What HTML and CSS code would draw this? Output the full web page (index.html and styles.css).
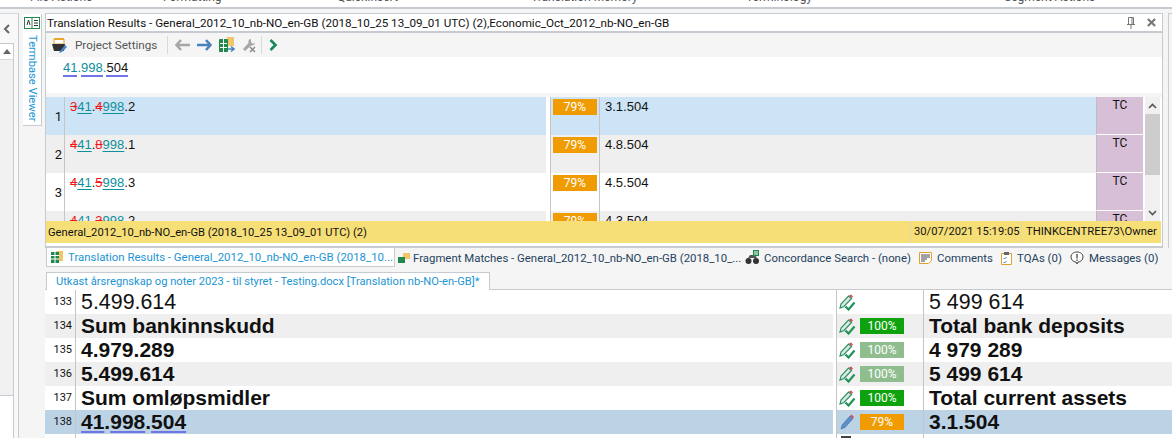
FILE: index.html
```html
<!DOCTYPE html>
<html lang="en">
<head>
    <meta charset="UTF-8">
    <title>Translation Results</title>
    <link rel="stylesheet" href="styles.css">
</head>
<body>
    <div class="ribbon">
        <span class="ribbon-label rl-1">File Actions</span>
        <span class="ribbon-label rl-2">Formatting</span>
        <span class="ribbon-label rl-3">QuickInsert</span>
        <span class="ribbon-label rl-4">Translation Memory</span>
        <span class="ribbon-label rl-5">Terminology</span>
        <span class="ribbon-label rl-6">Segment Actions</span>
    </div>
    <div class="workspace">
        <div class="side-strip">
            <div class="collapse">
                <svg width="8" height="10" viewBox="0 0 8 10"><path d="M6 1 2 5l4 4" fill="none" stroke="#666" stroke-width="2"/></svg>
            </div>
            <div class="side-scroll">
                <svg width="8" height="5" viewBox="0 0 8 5"><path d="M0 5 4 0l4 5z" fill="#666"/></svg>
            </div>
            <div class="side-body"></div>
            <div class="side-white"></div>
        </div>
        <div class="gutter">
            <div class="termbase-tab">
                <svg width="16" height="12" viewBox="0 0 16 12"><rect x=".5" y=".5" width="15" height="11" fill="#fff" stroke="#1f8a4c"/><path d="M8 .5v11" stroke="#1f8a4c"/><path d="M3 8l1.500-5L6 8M10 3.500h4M10 6h4M10 8.500h4" fill="none" stroke="#333"/></svg>
                <span class="termbase-label">Termbase Viewer</span>
            </div>
        </div>
        <div class="content">
            <div class="upper">
                <div class="results-panel">
                    <div class="panel-title">
                        <span class="panel-name">Translation Results - General_2012_10_nb-NO_en-GB (2018_10_25 13_09_01 UTC) (2),Economic_Oct_2012_nb-NO_en-GB</span>
                        <svg class="pin" width="8" height="12" viewBox="0 0 8 12"><path d="M1.500.5h5v7h-5zM0 7.500h8M4 8v4M5 1v6" fill="none" stroke="#777"/></svg>
                        <svg class="close" width="9" height="9" viewBox="0 0 10 10"><path d="M1 1l8 8M9 1 1 9" stroke="#777" stroke-width="2.400"/></svg>
                    </div>
                    <div class="toolbar">
                        <svg class="tool-folder" width="16" height="15" viewBox="0 0 16 15"><path d="M2 1h10v5H2z" fill="#fff" stroke="#e0a030"/><path d="M2 1h10" stroke="#e9a82c" stroke-width="2"/><path d="M0 6h13l-1 7H2z" fill="#333"/><path d="M8 13l5-6 2 2-5 5-3 1z" fill="#4a86c5"/></svg>
                        <span class="tool-text">Project Settings</span>
                        <span class="tool-sep"></span>
                        <svg class="tool-icon" width="15" height="12" viewBox="0 0 15 12"><path d="M6 1 1.500 6 6 11M2 6h13" fill="none" stroke="#a6a6a6" stroke-width="2.600"/></svg>
                        <svg class="tool-icon" width="15" height="12" viewBox="0 0 15 12"><path d="M9 1l4.500 5L9 11M13 6H0" fill="none" stroke="#4a82bd" stroke-width="2.600"/></svg>
                        <svg class="tool-icon" width="16" height="16" viewBox="0 0 16 16"><path d="M8 0h7v9H8z" fill="#f2c56b"/><path d="M.5 2.500h8v12h-8z" fill="#fff" stroke="#1f8a4c"/><path d="M1 3h7v3H1zM1 7h7v3H1zM1 11h7v3H1z" fill="#1f8a4c"/><path d="M4.500 2v13" stroke="#fff"/><path d="M9 12h5M12 9.500l3 2.500-3 2.500" fill="none" stroke="#4a82bd" stroke-width="1.500"/></svg>
                        <svg class="tool-icon tool-last" width="15" height="15" viewBox="0 0 15 15"><path d="M9 1C7 1 6 3 6.500 5L1 11l2 2 6-5.500c2 .5 4-1 4-3l-2 1.500-2-2z" fill="#a6a6a6"/><path d="M8 9l5 5M13 9l-5 5" stroke="#8a8a8a" stroke-width="1.500"/></svg>
                        <span class="tool-sep"></span>
                        <svg class="tool-icon" width="9" height="12" viewBox="0 0 9 12"><path d="M1.500 1l5 5-5 5" fill="none" stroke="#148a5c" stroke-width="2.600"/></svg>
                    </div>
                    <div class="source-pane">
                        <span class="frag teal">41</span><span class="teal">.</span><span class="frag teal">998</span><span class="teal">.</span><span class="frag">504</span>
                    </div>
                    <div class="results-body">
                        <div class="results-grid">
                            <div class="res-row res-active">
                                <div class="res-num">1</div>
                                <div class="res-src"><span class="del">3</span><span class="ins">41</span>.<span class="del">4</span><span class="ins">998</span>.2</div>
                                <div class="res-score"><span class="badge badge-orange">79%</span></div>
                                <div class="res-trg">3.1.504</div>
                                <div class="res-tc">TC</div>
                            </div>
                            <div class="res-row res-alt">
                                <div class="res-num">2</div>
                                <div class="res-src"><span class="del">4</span><span class="ins">41</span>.<span class="del">8</span><span class="ins">998</span>.1</div>
                                <div class="res-score"><span class="badge badge-orange">79%</span></div>
                                <div class="res-trg">4.8.504</div>
                                <div class="res-tc">TC</div>
                            </div>
                            <div class="res-row">
                                <div class="res-num">3</div>
                                <div class="res-src"><span class="del">4</span><span class="ins">41</span>.<span class="del">5</span><span class="ins">998</span>.3</div>
                                <div class="res-score"><span class="badge badge-orange">79%</span></div>
                                <div class="res-trg">4.5.504</div>
                                <div class="res-tc">TC</div>
                            </div>
                            <div class="res-row res-alt">
                                <div class="res-num">4</div>
                                <div class="res-src"><span class="del">4</span><span class="ins">41</span>.<span class="del">3</span><span class="ins">998</span>.2</div>
                                <div class="res-score"><span class="badge badge-orange">79%</span></div>
                                <div class="res-trg">4.3.504</div>
                                <div class="res-tc">TC</div>
                            </div>
                        </div>
                        <div class="scrollbar">
                            <div class="scroll-btn"><svg width="9" height="6" viewBox="0 0 9 6"><path d="M1 5l3.500-3.500L8 5" fill="none" stroke="#555" stroke-width="1.600"/></svg></div>
                            <div class="scroll-thumb"></div>
                            <div class="scroll-track"></div>
                            <div class="scroll-btn"><svg width="9" height="6" viewBox="0 0 9 6"><path d="M1 1l3.500 3.500L8 1" fill="none" stroke="#555" stroke-width="1.600"/></svg></div>
                        </div>
                    </div>
                    <div class="status-bar">
                        <span class="status-name">General_2012_10_nb-NO_en-GB (2018_10_25 13_09_01 UTC) (2)</span>
                        <span class="status-date">30/07/2021 15:19:05</span>
                        <span class="status-user">THINKCENTREE73\Owner</span>
                    </div>
                </div>
                <div class="right-strip"></div>
            </div>
            <div class="dock-tabs">
                <div class="dock-tab dock-active">
                    <svg width="14" height="14" viewBox="0 0 14 14"><path d="M6 1h7v10H6z" fill="#f2c56b"/><path d="M1 2h8v11H1z" fill="#1f8a4c"/><path d="M1 5.500h8M1 9h8M5 2v11" stroke="#fff"/></svg>
                    <span>Translation Results - General_2012_10_nb-NO_en-GB (2018_10...</span>
                </div>
                <div class="dock-tab dock-frag">
                    <svg width="13" height="14" viewBox="0 0 13 14"><path d="M5 2h7v6H5z" fill="#f2c56b"/><path d="M0 6h7v6H0z" fill="#1f8a4c"/></svg>
                    <span>Fragment Matches - General_2012_10_nb-NO_en-GB (2018_10_...</span>
                </div>
                <div class="dock-tab dock-conc">
                    <svg width="15" height="15" viewBox="0 0 15 15"><circle cx="3.500" cy="11" r="3" fill="#333"/><circle cx="11" cy="11" r="3" fill="#333"/><path d="M3 8l2-3h5l2 3z" fill="#555"/><path d="M8 0h6v6H8z" fill="#1f8a4c"/><path d="M9 2h4M9 4h4" stroke="#fff"/></svg>
                    <span>Concordance Search - (none)</span>
                </div>
                <div class="dock-tab dock-comm">
                    <svg width="13" height="12" viewBox="0 0 13 12"><path d="M.5.5h12v8l-3 3h-9z" fill="#fff" stroke="#e0a030"/><path d="M2 3h9M2 5h9M2 7h6M2 9h4" stroke="#444"/></svg>
                    <span>Comments</span>
                </div>
                <div class="dock-tab dock-tqa">
                    <svg width="11" height="14" viewBox="0 0 11 14"><path d="M.5 2.500h10v11H.5z" fill="#fff" stroke="#e0a030"/><path d="M3 1h5v3H3z" fill="#666"/><path d="M2.500 7l1 1 2-2M2.500 11l1 1 2-2" fill="none" stroke="#3a7fc0"/></svg>
                    <span>TQAs (0)</span>
                </div>
                <div class="dock-tab dock-msg">
                    <svg width="14" height="14" viewBox="0 0 14 14"><path d="M7 1c3.500 0 6 2 6 5s-2.500 5-5 5l-1 2-1-2C3.500 11 1 9 1 6s2.500-5 6-5z" fill="#fff" stroke="#444"/><path d="M7 3v4.500M7 8.500v1.500" stroke="#444" stroke-width="1.300"/></svg>
                    <span>Messages (0)</span>
                </div>
            </div>
            <div class="doc-tabs">
                <div class="doc-tab">Utkast årsregnskap og noter 2023 - til styret - Testing.docx [Translation nb-NO-en-GB]*</div>
            </div>
            <div class="editor">
                <div class="ed-row ed-plain">
                    <div class="ed-num">133</div>
                    <div class="ed-src">5.499.614</div>
                    <div class="ed-status"><svg class="pen" width="17" height="17" viewBox="0 0 17 17"><use href="#pen-done"/></svg></div>
                    <div class="ed-trg">5 499 614</div>
                </div>
                <div class="ed-row ed-alt ed-bold">
                    <div class="ed-num">134</div>
                    <div class="ed-src">Sum bankinnskudd</div>
                    <div class="ed-status"><svg class="pen" width="17" height="17" viewBox="0 0 17 17"><use href="#pen-done"/></svg><span class="badge badge-green">100%</span></div>
                    <div class="ed-trg">Total bank deposits</div>
                </div>
                <div class="ed-row ed-bold">
                    <div class="ed-num">135</div>
                    <div class="ed-src">4.979.289</div>
                    <div class="ed-status"><svg class="pen" width="17" height="17" viewBox="0 0 17 17"><use href="#pen-done"/></svg><span class="badge badge-pale">100%</span></div>
                    <div class="ed-trg">4 979 289</div>
                </div>
                <div class="ed-row ed-alt ed-bold">
                    <div class="ed-num">136</div>
                    <div class="ed-src">5.499.614</div>
                    <div class="ed-status"><svg class="pen" width="17" height="17" viewBox="0 0 17 17"><use href="#pen-done"/></svg><span class="badge badge-pale">100%</span></div>
                    <div class="ed-trg">5 499 614</div>
                </div>
                <div class="ed-row ed-bold">
                    <div class="ed-num">137</div>
                    <div class="ed-src">Sum omløpsmidler</div>
                    <div class="ed-status"><svg class="pen" width="17" height="17" viewBox="0 0 17 17"><use href="#pen-done"/></svg><span class="badge badge-green">100%</span></div>
                    <div class="ed-trg">Total current assets</div>
                </div>
                <div class="ed-row ed-current ed-bold">
                    <div class="ed-num">138</div>
                    <div class="ed-src"><span class="ed-frag">41</span>.<span class="ed-frag">998</span>.<span class="ed-frag">504</span></div>
                    <div class="ed-status"><svg class="pen" width="17" height="17" viewBox="0 0 17 17"><path d="M2 15l1-4 8-9 3 2.500-8 9z" fill="#5f8fc9" stroke="#3c6ca8" stroke-width=".6"/><path d="M11 2l3 2.500 1-1.500-2.500-2.500z" fill="#d8505a"/></svg><span class="badge badge-orange">79%</span></div>
                    <div class="ed-trg">3.1.504</div>
                </div>
                <div class="ed-row">
                    <div class="ed-num"></div>
                    <div class="ed-src"></div>
                    <div class="ed-status ed-peek"><svg width="10" height="2" viewBox="0 0 10 2"><path d="M0 0h10v2H0z" fill="#444"/></svg></div>
                    <div class="ed-trg"></div>
                </div>
            </div>
        </div>
    </div>
    <svg class="defs" width="0" height="0">
        <symbol id="pen-done" viewBox="0 0 17 17">
            <path d="M1 14l1-4 7.500-8 3 2.500-7.500 8z" fill="#d3ecdf" stroke="#2f8a62" stroke-width="1.100"/>
            <path d="M10 1.500l2.500 2.500L14 2.500 12 .5z" fill="#cf4d50"/>
            <path d="M6.500 12.500l3 3 6-7" fill="none" stroke="#1e9456" stroke-width="2.200"/>
        </symbol>
    </svg>
</body>
</html>
```
FILE: styles.css
```css
* {
    box-sizing: border-box;
}
html,
body {
    margin: 0;
    padding: 0;
    height: 100%;
    overflow: hidden;
}
body {
    width: 1172px;
    height: 438px;
    background: #f5f5f5;
    color: #111;
    font-family: Roboto, sans-serif;
    font-size: 12px;
    display: flex;
    flex-direction: column;
}
svg {
    flex: none;
}
.defs {
    position: absolute;
}

/* ribbon group labels, only the bottom of them shows */
.ribbon {
    height: 9px;
    flex: none;
    background: #fff;
    border-bottom: 2px solid #c5cbd0;
    position: relative;
    overflow: hidden;
}
.ribbon-label {
    position: absolute;
    top: -10px;
    color: #555;
    font-size: 12px;
}
.rl-1 { left: 30px; }
.rl-2 { left: 163px; }
.rl-3 { left: 337px; }
.rl-4 { left: 531px; }
.rl-5 { left: 746px; }
.rl-6 { left: 1004px; }

.workspace {
    flex: 1;
    display: flex;
    min-height: 0;
}

/* left strip */
.side-strip {
    width: 19px;
    flex: none;
    margin-top: 4px;
    border-right: 1px solid #c5cbd0;
    border-top: 1px solid #d6dadd;
    display: flex;
    flex-direction: column;
    background: #f8f8f8;
}
.collapse {
    height: 29px;
    flex: none;
    width: 14px;
    display: flex;
    align-items: center;
    justify-content: center;
}
.side-scroll {
    height: 17px;
    width: 14px;
    flex: none;
    background: #fff;
    border-top: 1px solid #c5cbd0;
    border-right: 1px solid #c5cbd0;
    border-bottom: 1px solid #d6dadd;
    display: flex;
    align-items: center;
    justify-content: center;
}
.side-body {
    flex: 1;
    width: 14px;
    background: #f1f1f1;
    border-right: 1px solid #c5cbd0;
}
.side-white {
    height: 43px;
    width: 14px;
    flex: none;
    background: #fff;
    border-top: 1px solid #c5cbd0;
    border-right: 1px solid #c5cbd0;
}
.gutter {
    width: 26px;
    flex: none;
    padding: 5px 0 0 4px;
}
.termbase-tab {
    width: 19px;
    height: 112px;
    background: #fff;
    border: 1px solid #c5cbd0;
    border-left: 0;
    border-top: 0;
    display: flex;
    flex-direction: column;
    align-items: center;
    padding-top: 3px;
    gap: 6px;
}
.termbase-label {
    writing-mode: vertical-rl;
    color: #1b95d3;
    font-size: 11.2px;
    line-height: 18px;
    white-space: nowrap;
}

.content {
    flex: 1;
    min-width: 0;
    display: flex;
    flex-direction: column;
}
.upper {
    display: flex;
    flex: none;
}
.right-strip {
    flex: 1;
    margin: 4px 0 0 5px;
    border-left: 1px solid #c5cbd0;
    border-top: 1px solid #c5cbd0;
    background: #f5f5f5;
}

/* translation results panel */
.results-panel {
    margin-top: 4px;
    height: 235px;
    width: 1118px;
    flex: none;
    background: #fff;
    border: 1px solid #c5cbd0;
    border-bottom: 2px solid #c5cbd0;
    display: flex;
    flex-direction: column;
}
.panel-title {
    height: 19px;
    flex: none;
    display: flex;
    align-items: center;
    padding: 0 6px 0 1px;
    border-bottom: 2px solid #c5cbd0;
}
.panel-name {
    flex: 1;
    font-size: 11.65px;
    white-space: nowrap;
    overflow: hidden;
}
.pin {
    margin-right: 12px;
}
.toolbar {
    height: 24px;
    flex: none;
    display: flex;
    align-items: center;
    background: #f5f5f5;
    padding-left: 6px;
}
.tool-text {
    margin: 0 10px 0 7px;
    width: 82px;
    flex: none;
    color: #555;
    font-size: 11.7px;
    white-space: nowrap;
}
.tool-sep {
    width: 1px;
    height: 18px;
    background: #d6dadd;
    margin-right: 7px;
}
.tool-icon {
    margin-right: 7px;
}
.tool-last {
    margin-right: 4px;
}
.source-pane {
    height: 40px;
    flex: none;
    padding: 4px 0 0 17px;
    border-bottom: 4px solid #f5f5f5;
    font-family: "Liberation Sans", sans-serif;
    font-size: 13px;
    line-height: 14px;
}
.teal {
    color: #0d8f9c;
}
.frag {
    border-bottom: 2px solid #6f74e6;
}
.results-body {
    height: 124px;
    flex: none;
    display: flex;
    overflow: hidden;
}
.results-grid {
    width: 1097px;
    flex: none;
    overflow: hidden;
    font-family: "Liberation Sans", sans-serif;
    font-size: 13px;
}
.res-row {
    height: 38px;
    display: flex;
    background: #fff;
}
.res-alt {
    background: #efefef;
}
.res-active {
    background: #cde4f7;
}
.res-num {
    width: 19px;
    flex: none;
    border-right: 1px solid #c5c5c5;
    text-align: right;
    padding: 12px 2px 0 0;
    font-family: Roboto, sans-serif;
}
.res-src {
    width: 481px;
    flex: none;
    padding: 3px 0 0 5px;
    line-height: 14px;
}
.del {
    color: #f01818;
    text-decoration: line-through;
}
.ins {
    color: #0d8f9c;
    text-decoration: underline #0d8f9c 1px;
    text-underline-offset: 2px;
}
.res-score {
    width: 50px;
    flex: none;
    margin-left: 4px;
    padding: 2px 0 0 2px;
    border-left: 1px solid #c5c5c5;
    border-right: 1px solid #c5c5c5;
    box-shadow: -4px 0 0 #fff;
}
.res-trg {
    flex: 1;
    padding: 3px 0 0 5px;
    line-height: 14px;
}
.res-tc {
    width: 47px;
    flex: none;
    background: #d8bfd8;
    border-left: 1px solid #bdbdbd;
    border-bottom: 1px solid #fff;
    text-align: center;
    font-family: Roboto, sans-serif;
    font-size: 12px;
    line-height: 16px;
}
.badge {
    display: flex;
    align-items: center;
    justify-content: center;
    width: 44px;
    height: 16px;
    color: #fff;
    font-family: Roboto, sans-serif;
    font-size: 12px;
    font-weight: normal;
    flex: none;
}
.badge-orange {
    background: #f09c00;
}
.badge-green {
    background: #0ea30e;
}
.badge-pale {
    background: #90bd8e;
}
.scrollbar {
    width: 15px;
    flex: none;
    margin-left: 2px;
    display: flex;
    flex-direction: column;
    background: #f0f0f0;
}
.scroll-btn {
    height: 17px;
    flex: none;
    display: flex;
    align-items: center;
    justify-content: center;
}
.scroll-thumb {
    height: 61px;
    flex: none;
    background: #cdcdcd;
}
.scroll-track {
    flex: 1;
}
.status-bar {
    height: 22px;
    flex: none;
    display: flex;
    align-items: center;
    background: #f7df78;
    margin-right: 1px;
}
.status-name {
    flex: 1;
    padding-left: 2px;
    font-size: 11.2px;
    white-space: nowrap;
}
.status-date {
    width: 111px;
    flex: none;
    padding-left: 3px;
    border-left: 1px solid #e3d9a4;
    font-size: 11.2px;
    line-height: 22px;
    white-space: nowrap;
}
.status-user {
    width: 140px;
    flex: none;
    padding-left: 4px;
    border-left: 1px solid #e3d9a4;
    font-size: 11.3px;
    line-height: 22px;
    white-space: nowrap;
}

/* dock tabs */
.dock-tabs {
    height: 20px;
    flex: none;
    display: flex;
    font-size: 11.4px;
}
.dock-tab {
    display: flex;
    align-items: center;
    gap: 5px;
    height: 19px;
    flex: none;
    padding-left: 3px;
    white-space: nowrap;
    color: #24425e;
}
.dock-active {
    width: 349px;
    margin-left: 1px;
    background: #fff;
    border: 1px solid #c5cbd0;
    border-top: 0;
    color: #1b95d3;
    overflow: hidden;
    gap: 4px;
}
.dock-frag {
    width: 349px;
    gap: 2px;
}
.dock-conc {
    width: 172px;
    padding-left: 1px;
    gap: 4px;
}
.dock-comm {
    width: 82px;
}
.dock-tqa {
    width: 69px;
}
.dock-msg {
    width: 90px;
}
.doc-tabs {
    margin-top: 4px;
    height: 18px;
    flex: none;
    border-bottom: 1px solid #c5cbd0;
}
.doc-tab {
    width: 444px;
    height: 18px;
    margin-left: 1px;
    background: #fff;
    border: 1px solid #c5cbd0;
    border-bottom: 0;
    padding-left: 9px;
    color: #1b95d3;
    font-size: 11.15px;
    line-height: 17px;
    white-space: nowrap;
    overflow: hidden;
}

/* editor grid */
.editor {
    flex: 1;
    min-height: 0;
    background: #fff;
    font-family: "Liberation Sans", sans-serif;
    font-size: 21px;
    overflow: hidden;
}
.ed-row {
    height: 24px;
    display: flex;
    background: #fff;
    line-height: 24px;
}
.ed-alt {
    background: #efefef;
}
.ed-current {
    background: #bcd3e6;
}
.ed-bold {
    font-weight: bold;
}
.ed-plain {
    font-size: 21.4px;
}
.ed-num {
    width: 31px;
    flex: none;
    border-right: 1px solid #c5c5c5;
    padding-right: 3px;
    text-align: right;
    font-family: Roboto, sans-serif;
    font-size: 11px;
    font-weight: normal;
}
.ed-src {
    width: 757px;
    flex: none;
    padding-left: 5px;
}
.ed-frag {
    text-decoration: underline #6f74e6 2px;
    text-underline-offset: 2px;
}
.ed-status {
    width: 88px;
    flex: none;
    margin-left: 3px;
    border-left: 1px solid #c5c5c5;
    border-right: 1px solid #c5c5c5;
    display: flex;
    align-items: center;
    padding-left: 2px;
    gap: 4px;
    background: inherit;
    box-shadow: -3px 0 0 #fff;
}
.ed-peek {
    align-items: flex-start;
    padding: 2px 0 0 4px;
}
.ed-trg {
    flex: 1;
    padding-left: 5px;
}
```
